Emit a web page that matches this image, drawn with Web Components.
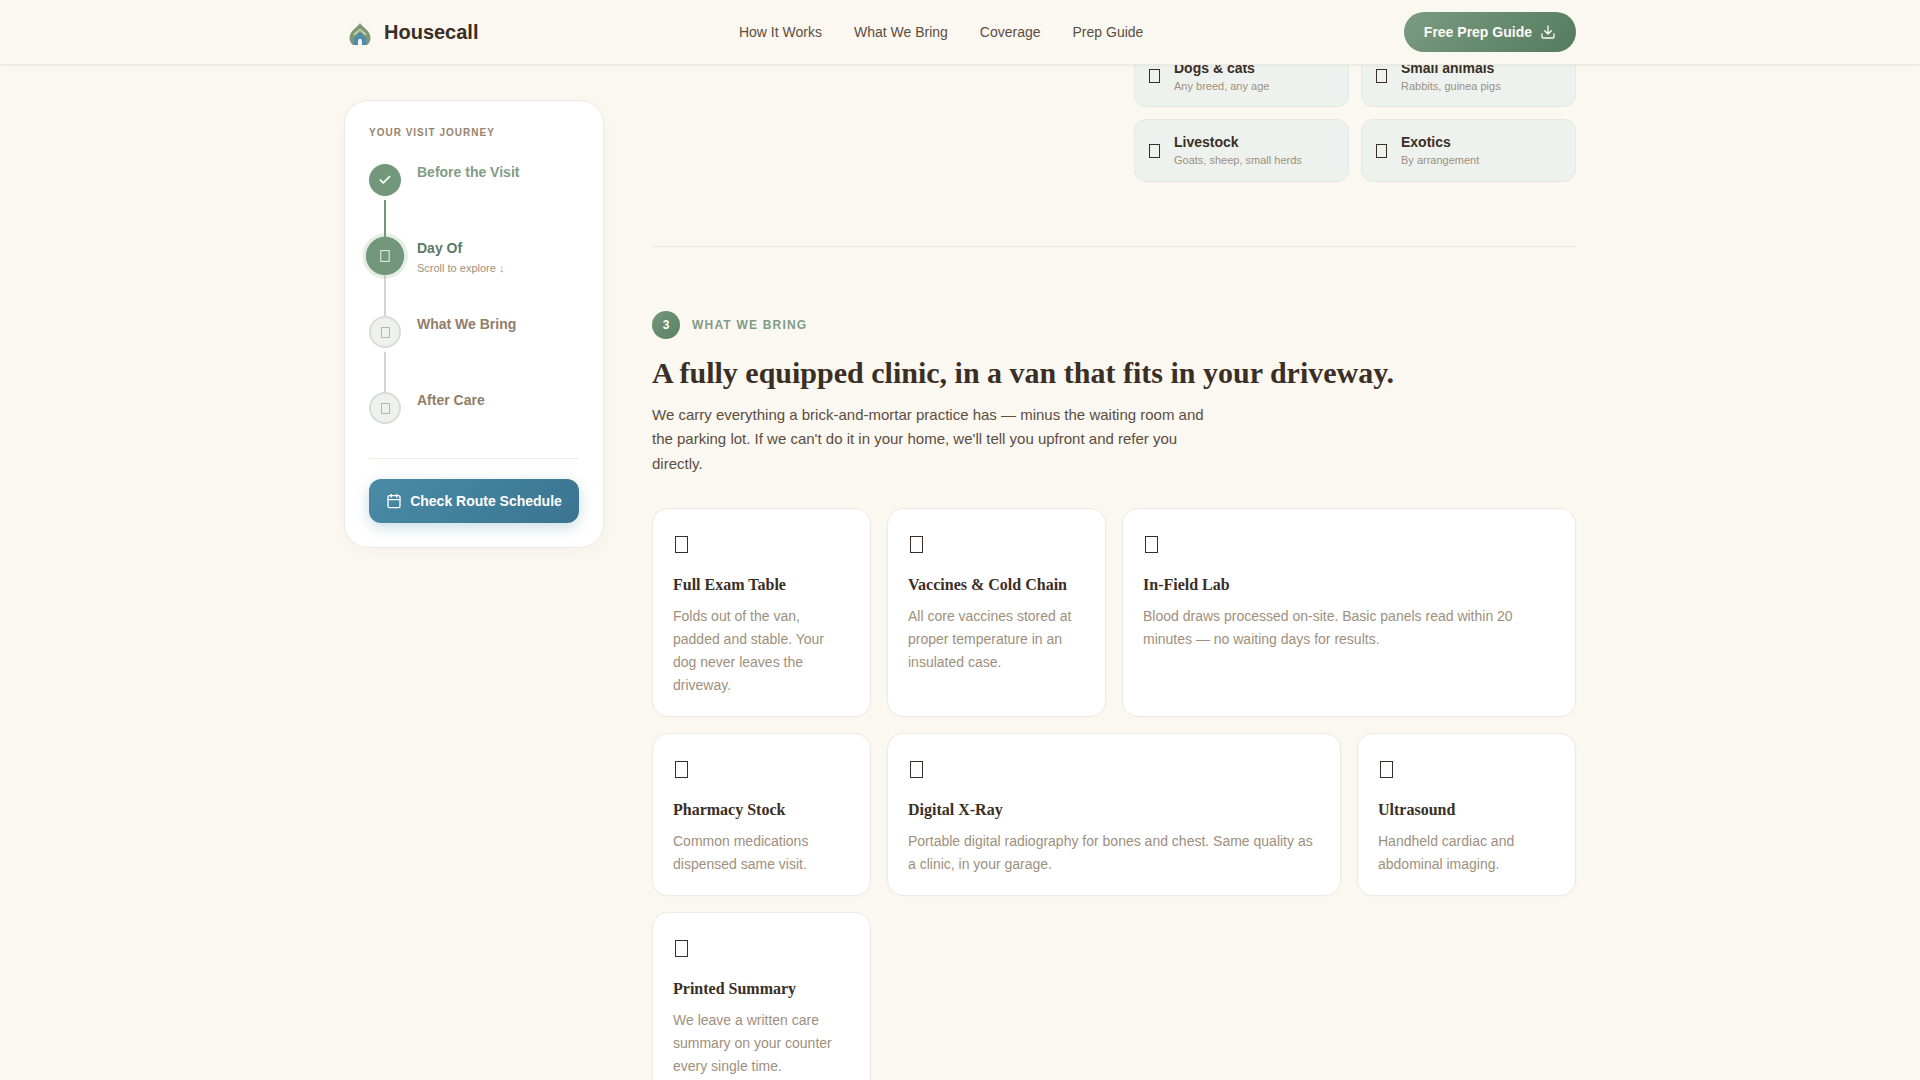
<!DOCTYPE html>
<html lang="en"><head><meta charset="utf-8"><title>Housecall</title>
<style>
html,body{margin:0;height:1080px;overflow:hidden;background:#FBF8F2;font-family:"Liberation Sans",Arial,sans-serif;color:#3A2E25}
</style></head><body>
<hc-nav></hc-nav>
<hc-layout>
  <hc-journey slot="side"></hc-journey>
  <hc-pets slot="main"></hc-pets>
  <hc-section slot="main"></hc-section>
</hc-layout>
<script>
const def=(name,html)=>customElements.define(name,class extends HTMLElement{
  constructor(){super();this.attachShadow({mode:'open'}).innerHTML=typeof html==='function'?html(this):html;}
});
def('hc-tofu',`<style>
:host{display:inline-block;flex:none;box-sizing:border-box;width:var(--w,13px);height:var(--h,17px);border:1px solid var(--c,#3A2E25)}
</style>`);
def('hc-nav',`<style>
:host{display:block;position:relative;z-index:10;height:64px;background:#FBF8F2;border-bottom:1px solid #ECE7DF;box-shadow:0 1px 3px rgba(60,50,40,.05)}
.in{box-sizing:border-box;max-width:1280px;height:64px;margin:0 auto;padding:0 24px;display:flex;justify-content:space-between;align-items:center}
.brand{display:flex;align-items:center;gap:8px;font-size:20px;font-weight:700;color:#3A2E25}
nav{display:flex;gap:32px;font-size:14px;color:#5C4D3F}
.cta{height:40px;box-sizing:border-box;padding:0 20px;display:flex;align-items:center;gap:8px;border-radius:20px;background:linear-gradient(135deg,#7A9C80,#557A5E);color:#FDFBF7;font-size:14px;font-weight:700}
</style><div class="in">
<div class="brand"><svg width="32" height="32" viewBox="0 0 32 32"><path d="M16 7C13 11.500 5.500 15 5.500 22c0 3.500 1.500 5.500 3.500 7h14c2-1.500 3.500-3.500 3.500-7 0-7-7.500-10.500-10.500-15Z" fill="#7F9A72"/><path d="M16 12.500c-1.800 2-4.500 3.500-6.500 6l1 1c2-2 3.800-3.300 5.500-5 1.700 1.700 3.500 3 5.500 5l1-1c-2-2.500-4.700-4-6.500-6Z" fill="#C9D6BC"/><path d="M16 16.500 9.500 22.500V29h13v-6.500Z" fill="#4F8AAB"/><path d="M14 29v-4.200a2 2 0 0 1 4 0V29Z" fill="#F3F5EF"/></svg><span>Housecall</span></div>
<nav><span>How It Works</span><span>What We Bring</span><span>Coverage</span><span>Prep Guide</span></nav>
<div class="cta"><span>Free Prep Guide</span><svg width="16" height="16" viewBox="0 0 24 24" fill="none" stroke="#FDFBF7" stroke-width="2" stroke-linecap="round" stroke-linejoin="round"><path d="M21 15v4a2 2 0 0 1-2 2H5a2 2 0 0 1-2-2v-4M7 10l5 5 5-5M12 15V3"/></svg></div>
</div>`);
def('hc-layout',`<style>
:host{display:grid;box-sizing:border-box;max-width:1280px;margin:0 auto;padding:0 24px;grid-template-columns:260px 1fr;gap:48px}
.s{display:block;padding-top:35px}
.m{display:block;min-width:0}
</style><div class="s"><slot name="side"></slot></div><div class="m"><slot name="main"></slot></div>`);
def('hc-step',h=>{
 const st=h.getAttribute('state'),sub=h.getAttribute('sub');
 const ic=st==='done'?`<svg width="14" height="14" viewBox="0 0 24 24" fill="none" stroke="#fff" stroke-width="3" stroke-linecap="round" stroke-linejoin="round"><path d="M20 6 9 17l-5-5"/></svg>`:`<hc-tofu></hc-tofu>`;
 return `<style>
:host{display:flex;gap:16px;position:relative;height:76px}
hc-tofu{--w:9px;--h:11px;--c:#B5B6AF}
.c{flex:none;box-sizing:border-box;width:32px;height:32px;border-radius:50%;display:flex;align-items:center;justify-content:center;position:relative;z-index:1;background:#EEF1EE;border:2px solid #DADCD8}
:host([state=done]) .c{background:#73977A;border:0}
:host([state=active]) .c{background:#73977A;border:0;transform:scale(1.2);box-shadow:0 0 0 3px rgba(115,151,122,.17)}
:host([state=active]) hc-tofu{--w:8.500px;--h:10.500px;--c:#D6E3D8}
.l{position:absolute;left:15px;top:36px;bottom:0;width:2px;background:#D5D5D0}
:host([state=done]) .l{background:#73977A}
:host([last]) .l{display:none}
.t{font-size:14px;font-weight:700;line-height:16px;color:#917D68}
:host([state=done]) .t{color:#7F9C85}
:host([state=active]) .t{color:#5E7A65}
.s{font-size:11px;line-height:13px;margin-top:6px;color:#9E8F7D;font-weight:400}
</style><div class="c">${ic}</div><div class="l"></div><div><div class="t">${h.getAttribute('label')}</div>${sub?`<div class="s">${sub}</div>`:''}</div>`});
def('hc-journey',`<style>
:host{display:block;box-sizing:border-box;height:448px;padding:24px;background:#fff;border:1px solid #EEEAE3;border-radius:24px;box-shadow:0 4px 16px rgba(60,50,40,.03)}
h2{margin:0 0 24px;font-size:10px;line-height:15px;letter-spacing:.1em;font-weight:700;color:#958470}
hr{border:0;border-top:1px solid #F1EDE6;margin:-10px 0 20px}
.b{height:44px;border-radius:12px;background:linear-gradient(135deg,#4A8BA6,#3A7490);color:#fff;font-size:14px;font-weight:700;display:flex;align-items:center;justify-content:center;gap:8px;box-shadow:0 4px 14px rgba(74,139,166,.3)}
</style><h2>YOUR VISIT JOURNEY</h2>
<hc-step state="done" label="Before the Visit"></hc-step>
<hc-step state="active" label="Day Of" sub="Scroll to explore ↓"></hc-step>
<hc-step label="What We Bring"></hc-step>
<hc-step last label="After Care"></hc-step>
<hr>
<div class="b"><svg width="16" height="16" viewBox="0 0 24 24" fill="none" stroke="#fff" stroke-width="2" stroke-linecap="round" stroke-linejoin="round"><rect x="3" y="4" width="18" height="18" rx="2"/><path d="M16 2v4M8 2v4M3 10h18"/></svg><span>Check Route Schedule</span></div>`);
def('hc-pet',h=>`<style>
:host{display:flex;align-items:center;gap:14px;box-sizing:border-box;height:62.600px;padding:0 14px;background:#EEF2EE;border:1px solid #E3E8E3;border-radius:12px}
hc-tofu{--w:11px;--h:14px}
.n{font-size:14px;font-weight:700;line-height:18px;margin-bottom:1px;color:#3A2E25}
.d{font-size:11px;line-height:16px;color:#9E8F7D}
</style><hc-tofu></hc-tofu><div><div class="n">${h.getAttribute('name')}</div><div class="d">${h.getAttribute('desc')}</div></div>`);
def('hc-pets',`<style>
:host{display:block;margin-top:-20.200px}
.g{display:grid;grid-template-columns:215px 215px;gap:12px;justify-content:end}
</style><div class="g">
<hc-pet name="Dogs &amp; cats" desc="Any breed, any age"></hc-pet>
<hc-pet name="Small animals" desc="Rabbits, guinea pigs"></hc-pet>
<hc-pet name="Livestock" desc="Goats, sheep, small herds"></hc-pet>
<hc-pet name="Exotics" desc="By arrangement"></hc-pet>
</div>`);
def('hc-card',h=>`<style>
:host{display:block;box-sizing:border-box;padding:20px 20px 19px;background:#fff;border:1px solid #EEEAE3;border-radius:16px;box-shadow:0 1px 4px rgba(60,50,40,.02)}
:host([w="2"]){grid-column:span 2}
.g{height:30px;display:flex;align-items:center;padding-left:2px}
h3{margin:16px 0 8.700px;font:700 16px/20.800px "Liberation Serif",serif;color:#3A2E25}
p{margin:0;font-size:14px;line-height:23.100px;color:#9E8F7D}
</style><div class="g"><hc-tofu></hc-tofu></div><h3>${h.getAttribute('t')}</h3><p>${h.getAttribute('d')}</p>`);
def('hc-section',`<style>
:host{display:block;margin-top:64px;border-top:1px solid #ECE7DF;padding-top:64px}
.k{display:flex;align-items:center;gap:12px;height:28px}
.n{width:28px;height:28px;border-radius:50%;background:linear-gradient(135deg,#73977A,#5C8064);color:#fff;font-size:12px;font-weight:700;display:flex;align-items:center;justify-content:center}
.e{font-size:12px;font-weight:700;letter-spacing:.1em;color:#7F9C85}
h1{margin:14px 0 9.600px;font:700 30px/40px "Liberation Serif",serif;color:#3A2E25}
.p{margin:0 0 32.400px;max-width:560px;font-size:15px;line-height:24.500px;color:#5C4D3F}
.g{display:grid;grid-template-columns:repeat(4,1fr);gap:16px}
</style><div class="k"><div class="n">3</div><div class="e">WHAT WE BRING</div></div>
<h1>A fully equipped clinic, in a van that fits in your driveway.</h1>
<p class="p">We carry everything a brick-and-mortar practice has — minus the waiting room and the parking lot. If we can't do it in your home, we'll tell you upfront and refer you directly.</p>
<div class="g">
<hc-card t="Full Exam Table" d="Folds out of the van, padded and stable. Your dog never leaves the driveway."></hc-card>
<hc-card t="Vaccines &amp; Cold Chain" d="All core vaccines stored at proper temperature in an insulated case."></hc-card>
<hc-card w="2" t="In-Field Lab" d="Blood draws processed on-site. Basic panels read within 20 minutes — no waiting days for results."></hc-card>
<hc-card t="Pharmacy Stock" d="Common medications dispensed same visit."></hc-card>
<hc-card w="2" t="Digital X-Ray" d="Portable digital radiography for bones and chest. Same quality as a clinic, in your garage."></hc-card>
<hc-card t="Ultrasound" d="Handheld cardiac and abdominal imaging."></hc-card>
<hc-card t="Printed Summary" d="We leave a written care summary on your counter every single time."></hc-card>
</div>`);
</script></body></html>
